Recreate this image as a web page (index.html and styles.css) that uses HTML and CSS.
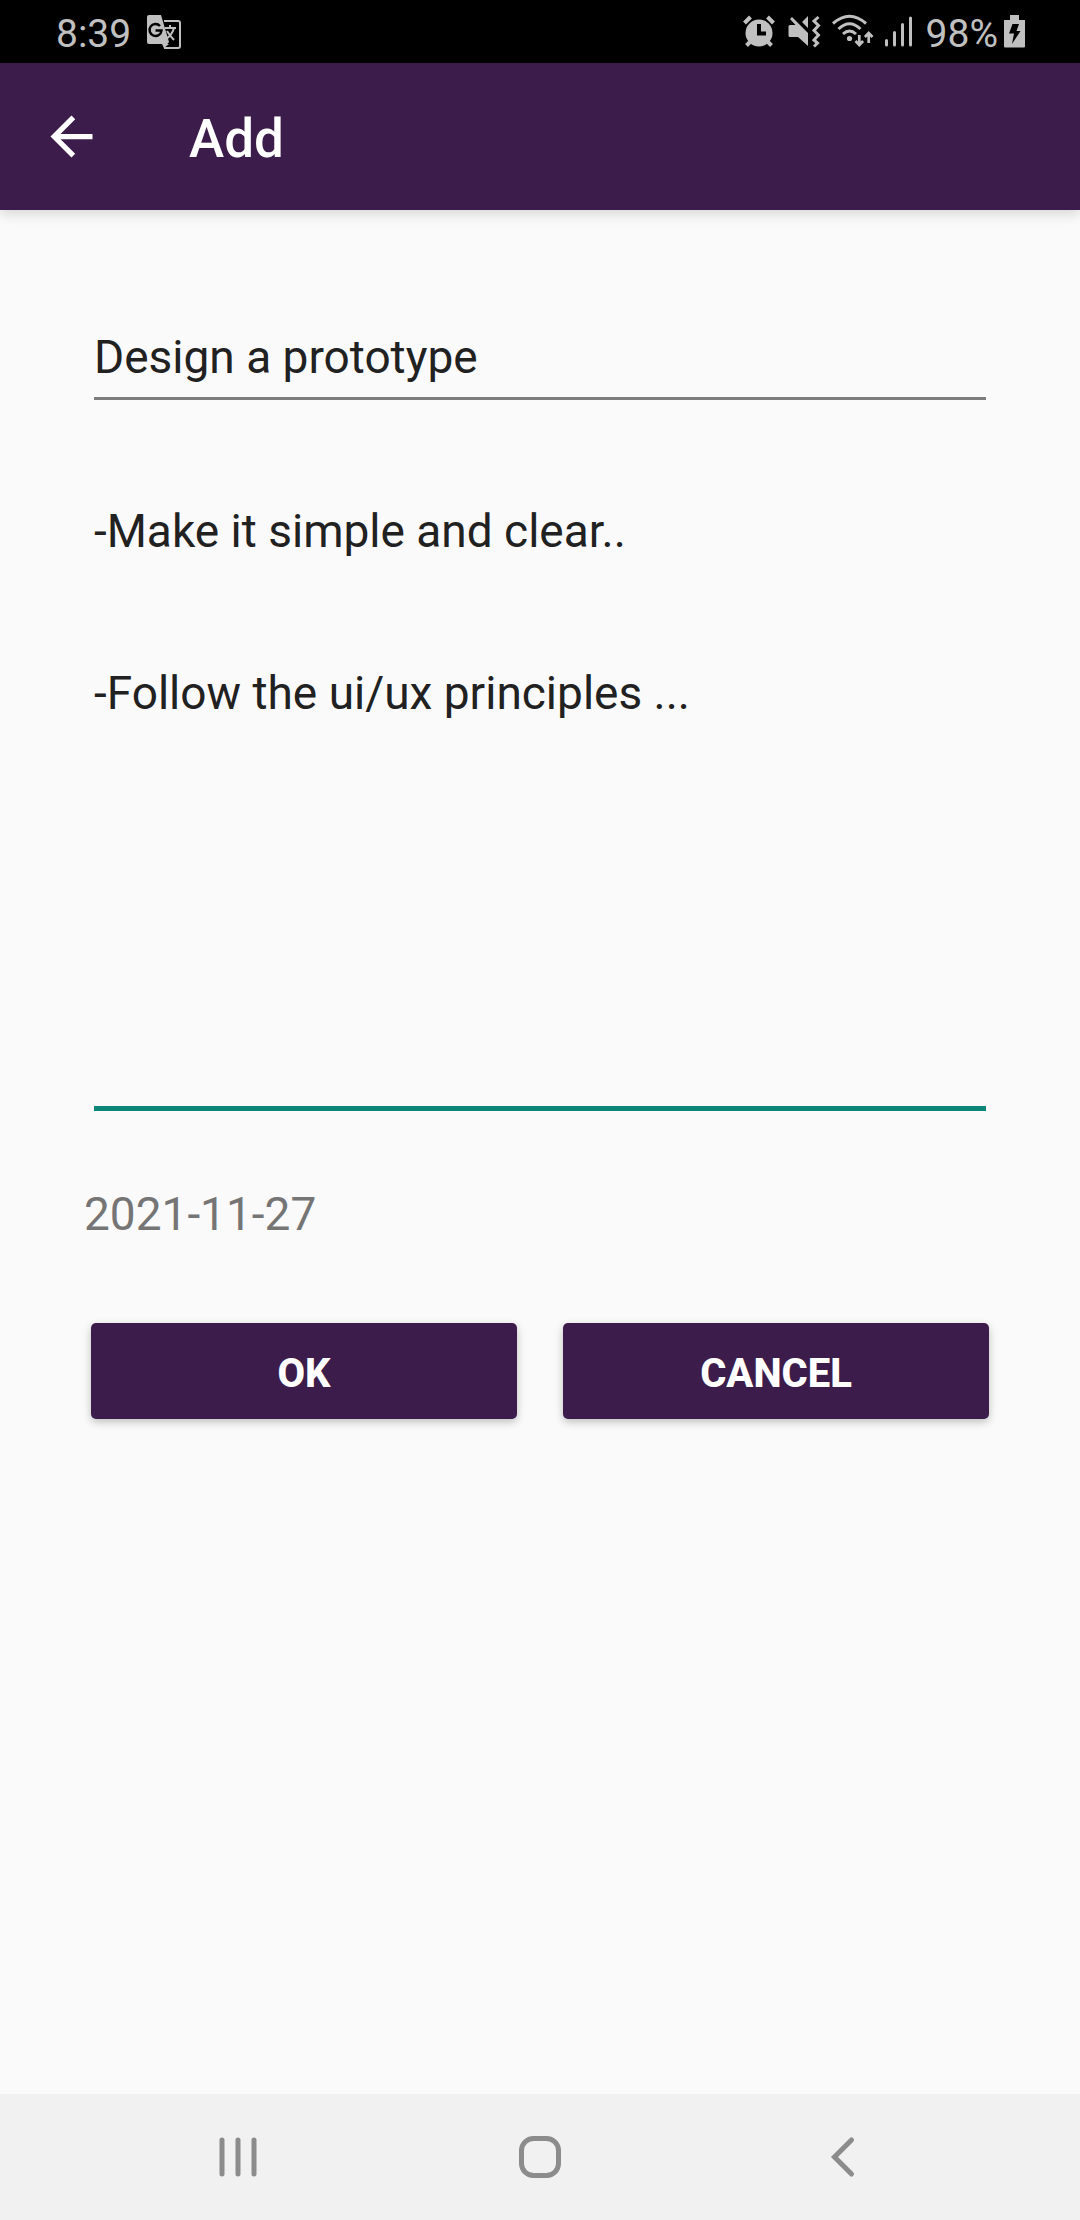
FILE: index.html
```html
<!DOCTYPE html>
<html lang="en">
<head>
  <meta charset="utf-8">
  <meta name="viewport" content="width=device-width, initial-scale=1">
  <title>Add</title>
  <link rel="stylesheet" href="styles.css">
</head>
<body>
  <div class="status-bar">
    <div class="status-group">
      <span class="status-text">8:39</span>
      <svg class="status-icon translate-icon" width="36" height="36" viewBox="0 0 36 36" aria-hidden="true">
        <path d="M18 7h14a2 2 0 0 1 2 2v23a2 2 0 0 1-2 2H18" fill="none" stroke="#c0c0c0" stroke-width="2"/>
        <path d="M3 1h12l8 27-5 6-2-4H3a2 2 0 0 1-2-2V3a2 2 0 0 1 2-2z" fill="#c0c0c0"/>
        <path d="M14 12A6 6 0 1 0 15.500 16.500H9.500" fill="none" stroke="#000" stroke-width="2.500"/>
        <path d="M19 14h11M24 11v3M28 14q-2 7-8 11M21 17q3 5 7 9" fill="none" stroke="#c0c0c0" stroke-width="2"/>
        <path d="M17 30h6l-5 4z" fill="#c0c0c0"/>
      </svg>
    </div>
    <div class="status-group">
      <svg class="status-icon" width="34" height="36" viewBox="0 0 34 36" aria-hidden="true">
        <circle cx="17" cy="19" r="13.500" fill="#c0c0c0"/>
        <path d="M2.500 9l6-6M31.500 9l-6-6M4.500 31.500l5-5M29.500 31.500l-5-5" stroke="#c0c0c0" stroke-width="4"/>
        <path d="M17 10v9.500h7" fill="none" stroke="#000" stroke-width="4"/>
      </svg>
      <svg class="status-icon" width="36" height="36" viewBox="-2 0 36 36" aria-hidden="true">
        <path d="M3 11h5.500L3 5l2-2 16 16v13l-10-9H3q-1.500 0-1.500-1.500v-9Q1.500 11 3 11zM21 2v12l-6-6z" fill="#c0c0c0"/>
        <path d="M31.500 3L27 7l4.500 4.500L27 16.500l4.500 4.500L27 26l3.500 3-3.500 3.500" fill="none" stroke="#c0c0c0" stroke-width="3"/>
      </svg>
      <svg class="status-icon" width="45" height="36" viewBox="0 0 45 36" aria-hidden="true">
        <path d="M3 9.500Q19.500-5 36 9.500M8.500 15Q19.500 4.500 30.500 15M13 20Q19.500 14 26 20" fill="none" stroke="#c0c0c0" stroke-width="3"/>
        <circle cx="19.500" cy="24.500" r="2.600" fill="#c0c0c0"/>
        <path d="M29.300 21v10M25.500 27l3.800 4 3.800-4M38.700 29V19M34.900 23l3.800-4 3.800 4" fill="none" stroke="#c0c0c0" stroke-width="2.700"/>
      </svg>
      <svg class="status-icon" width="29" height="36" viewBox="0 0 29 36" aria-hidden="true">
        <path d="M2.500 26.500v4.500M10.500 18.500V31M18.500 10.500V31M26.500 4V31" stroke="#c0c0c0" stroke-width="3" stroke-linecap="round"/>
      </svg>
      <span class="status-text battery-level">98%</span>
      <svg class="status-icon battery-icon" width="24" height="36" viewBox="0 0 24 36" aria-hidden="true">
        <path d="M7 1h9v5h5.500q.5 0 .5.500v26q0 1-1 1H2q-1 0-1-1v-26Q1 6 1.500 6H7z" fill="#c0c0c0"/>
        <path d="M9.500 10h6.500l-2.500 7H17.500L9 30l2-10.500H6z" fill="#000"/>
      </svg>
    </div>
  </div>

  <header class="app-bar">
    <button class="icon-button" type="button" aria-label="Back">
      <svg width="63" height="63" viewBox="0 0 24 24" aria-hidden="true">
        <path d="M20 11H7.830l5.590-5.590L12 4l-8 8 8 8 1.410-1.410L7.830 13H20z" fill="#fff"/>
      </svg>
    </button>
    <h1 class="app-title">Add</h1>
  </header>

  <main class="content">
    <form class="form">
      <input class="field title-field" type="text" aria-label="Title" value="Design a prototype">
      <textarea class="field notes-field" aria-label="Description">-Make it simple and clear..


-Follow the ui/ux principles ...</textarea>
      <time class="date" datetime="2021-11-27">2021-11-27</time>
      <div class="actions">
        <button class="action" type="button">OK</button>
        <button class="action" type="button">CANCEL</button>
      </div>
    </form>
  </main>

  <nav class="nav-bar" aria-label="System">
    <button class="nav-button" type="button" aria-label="Recent apps">
      <svg width="42" height="42" viewBox="0 0 42 42" aria-hidden="true">
        <path d="M5 4v34M21 4v34M37 4v34" stroke="#8c8c8c" stroke-width="5" stroke-linecap="round"/>
      </svg>
    </button>
    <button class="nav-button" type="button" aria-label="Home">
      <svg width="42" height="42" viewBox="0 0 42 42" aria-hidden="true">
        <rect x="2.500" y="2.500" width="37" height="37" rx="12" fill="none" stroke="#8c8c8c" stroke-width="5"/>
      </svg>
    </button>
    <button class="nav-button" type="button" aria-label="Back">
      <svg width="42" height="42" viewBox="0 0 42 42" aria-hidden="true">
        <path d="M30.500 4L13.500 21l17 17" fill="none" stroke="#8c8c8c" stroke-width="5" stroke-linecap="round"/>
      </svg>
    </button>
  </nav>
</body>
</html>
```
FILE: styles.css
```css
* {
  box-sizing: border-box;
}

body {
  margin: 0;
  min-height: 100vh;
  display: flex;
  flex-direction: column;
  background: #fafafa;
  color: #212121;
  font-family: Roboto, "Liberation Sans", sans-serif;
}

button {
  margin: 0;
  padding: 0;
  border: 0;
  background: none;
  font-family: inherit;
}

svg {
  display: block;
}

.status-bar {
  display: flex;
  justify-content: space-between;
  align-items: center;
  height: 63px;
  padding: 0 53px 0 56px;
  background: #000;
  color: #c0c0c0;
}

.status-group {
  display: flex;
  align-items: center;
  gap: 9px;
}

.status-text {
  font-size: 39px;
  line-height: 46px;
  padding-top: 4px;
}

.translate-icon {
  margin-left: 6px;
}

.battery-level {
  margin-left: 4px;
}

.battery-icon {
  margin-left: -4px;
}

.app-bar {
  display: flex;
  align-items: center;
  gap: 86px;
  height: 147px;
  padding: 0 40px;
  background: #3c1c4a;
  box-shadow: 0 4px 12px rgba(0, 0, 0, 0.14);
}

.app-title {
  margin: 0;
  padding-top: 4px;
  color: #fff;
  font-size: 53px;
  line-height: 62px;
  font-weight: 500;
}

.content {
  flex: 1;
  padding: 120px 84px 80px;
}

.form {
  display: flex;
  flex-direction: column;
}

.field {
  margin: 0 10px;
  padding: 0;
  border: 0;
  border-radius: 0;
  outline: 0;
  background: none;
  color: inherit;
  font-family: inherit;
  font-size: 46px;
  line-height: 54px;
}

.title-field {
  height: 70px;
  padding-bottom: 13px;
  border-bottom: 3px solid #7c7c7c;
}

.notes-field {
  height: 607px;
  margin-top: 104px;
  border-bottom: 5px solid #0b8577;
  resize: none;
  overflow: hidden;
}

.date {
  margin-top: 76px;
  color: #757575;
  font-size: 46px;
  line-height: 54px;
}

.actions {
  display: flex;
  gap: 46px;
  margin: 82px 7px 0;
}

.action {
  flex: 1;
  height: 96px;
  padding-top: 6px;
  border-radius: 5px;
  background: #3c1c4a;
  box-shadow: 0 3px 8px rgba(0, 0, 0, 0.24);
  color: #fff;
  font-size: 40px;
  line-height: 46px;
  font-weight: 800;
}

.nav-bar {
  display: flex;
  justify-content: center;
  height: 126px;
  background: #f1f1f1;
}

.nav-button {
  display: flex;
  justify-content: center;
  align-items: center;
  width: 28%;
}
```
